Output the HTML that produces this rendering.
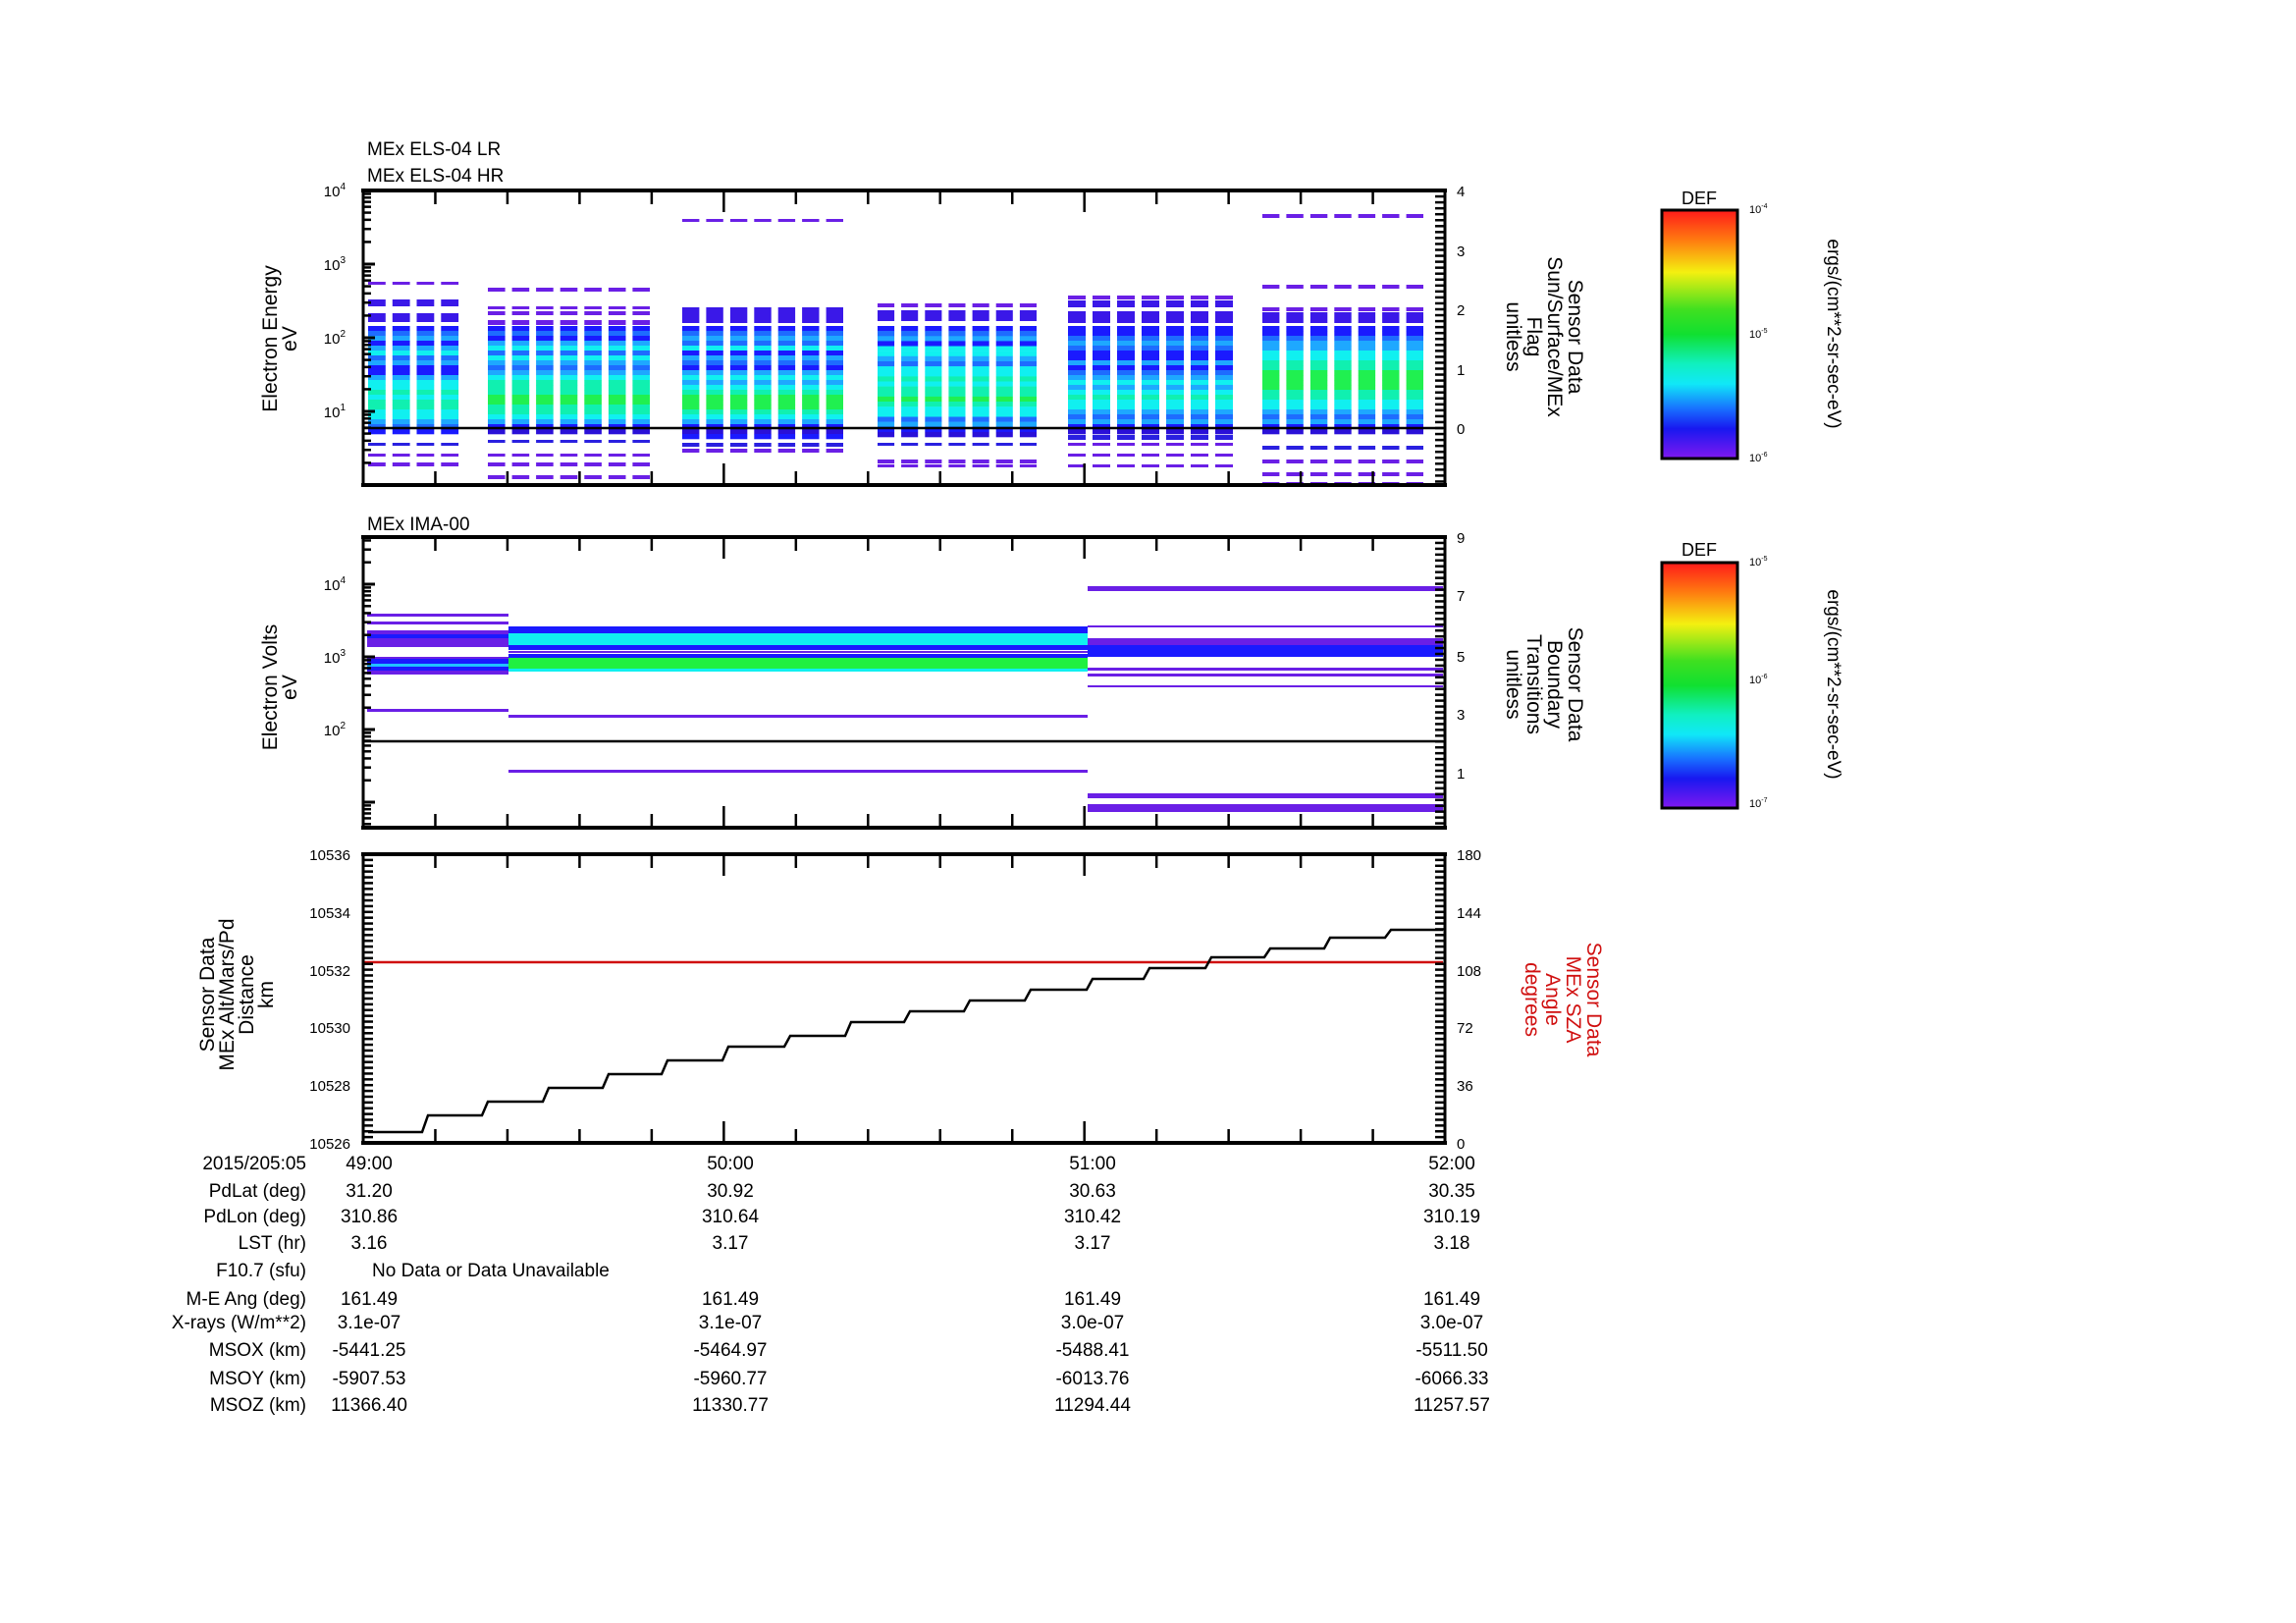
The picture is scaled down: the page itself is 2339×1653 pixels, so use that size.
<!DOCTYPE html>
<html><head><meta charset="utf-8"><style>
html,body{margin:0;padding:0;background:#fff;}
svg{display:block;font-family:"Liberation Sans",Arial,sans-serif;}
</style></head><body>
<svg id="s" width="2339" height="1653" viewBox="0 0 2339 1653" xmlns="http://www.w3.org/2000/svg">
<defs>
<linearGradient id="cb" x1="0" y1="0" x2="0" y2="1">
<stop offset="0" stop-color="#ff1a1a"/><stop offset="0.12" stop-color="#ff7a10"/><stop offset="0.25" stop-color="#f4f010"/><stop offset="0.4" stop-color="#40e020"/><stop offset="0.5" stop-color="#10e030"/><stop offset="0.62" stop-color="#10f0c0"/><stop offset="0.7" stop-color="#10e8f8"/><stop offset="0.8" stop-color="#1870ff"/><stop offset="0.88" stop-color="#1818f0"/><stop offset="1" stop-color="#8018f0"/>
</linearGradient>
</defs>
<g id="g"></g>
<g font-size="19" fill="#000">
<text x="374" y="158">MEx ELS-04 LR</text>
<text x="374" y="185">MEx ELS-04 HR</text>
<text x="374" y="540">MEx IMA-00</text>
</g>
<g font-size="15" text-anchor="end">
<text x="352" y="200">10<tspan font-size="10" dy="-7">4</tspan></text>
<text x="352" y="275">10<tspan font-size="10" dy="-7">3</tspan></text>
<text x="352" y="350">10<tspan font-size="10" dy="-7">2</tspan></text>
<text x="352" y="425">10<tspan font-size="10" dy="-7">1</tspan></text>
<text x="352" y="601">10<tspan font-size="10" dy="-7">4</tspan></text>
<text x="352" y="675">10<tspan font-size="10" dy="-7">3</tspan></text>
<text x="352" y="749">10<tspan font-size="10" dy="-7">2</tspan></text>
<text x="357" y="876">10536</text><text x="357" y="935">10534</text><text x="357" y="994">10532</text><text x="357" y="1052">10530</text><text x="357" y="1111">10528</text><text x="357" y="1170">10526</text>
</g>
<g font-size="15">
<text x="1484" y="200">4</text><text x="1484" y="261">3</text><text x="1484" y="321">2</text><text x="1484" y="382">1</text><text x="1484" y="442">0</text>
<text x="1484" y="553">9</text><text x="1484" y="612">7</text><text x="1484" y="674">5</text><text x="1484" y="733">3</text><text x="1484" y="793">1</text>
<text x="1484" y="876">180</text><text x="1484" y="935">144</text><text x="1484" y="994">108</text><text x="1484" y="1052">72</text><text x="1484" y="1111">36</text><text x="1484" y="1170">0</text>
</g>
<g font-size="21" text-anchor="middle">
<text transform="translate(282,345) rotate(-90)"><tspan x="0" y="0">Electron Energy</tspan><tspan x="0" y="20">eV</tspan></text>
<text transform="translate(282,700) rotate(-90)"><tspan x="0" y="0">Electron Volts</tspan><tspan x="0" y="20">eV</tspan></text>
<text transform="translate(218,1013) rotate(-90)"><tspan x="0" y="0">Sensor Data</tspan><tspan x="0" y="20">MEx Alt/Mars/Pd</tspan><tspan x="0" y="40">Distance</tspan><tspan x="0" y="60">km</tspan></text>
<text transform="translate(1598,343) rotate(90)"><tspan x="0" y="0">Sensor Data</tspan><tspan x="0" y="21">Sun/Surface/MEx</tspan><tspan x="0" y="42">Flag</tspan><tspan x="0" y="63">unitless</tspan></text>
<text transform="translate(1598,697) rotate(90)"><tspan x="0" y="0">Sensor Data</tspan><tspan x="0" y="21">Boundary</tspan><tspan x="0" y="42">Transitions</tspan><tspan x="0" y="63">unitless</tspan></text>
<text fill="#d01010" transform="translate(1617,1018) rotate(90)"><tspan x="0" y="0">Sensor Data</tspan><tspan x="0" y="21">MEx SZA</tspan><tspan x="0" y="42">Angle</tspan><tspan x="0" y="63">degrees</tspan></text>
</g>
<rect x="1693" y="214" width="77" height="253" fill="url(#cb)" stroke="#000" stroke-width="3"/>
<rect x="1693" y="573" width="77" height="250" fill="url(#cb)" stroke="#000" stroke-width="3"/>
<g font-size="18" text-anchor="middle"><text x="1731" y="208">DEF</text><text x="1731" y="566">DEF</text></g>
<g font-size="11">
<text x="1782" y="217">10<tspan font-size="7" dy="-5">-4</tspan></text>
<text x="1782" y="344">10<tspan font-size="7" dy="-5">-5</tspan></text>
<text x="1782" y="470">10<tspan font-size="7" dy="-5">-6</tspan></text>
<text x="1782" y="576">10<tspan font-size="7" dy="-5">-5</tspan></text>
<text x="1782" y="696">10<tspan font-size="7" dy="-5">-6</tspan></text>
<text x="1782" y="822">10<tspan font-size="7" dy="-5">-7</tspan></text>
</g>
<g font-size="19" text-anchor="middle">
<text transform="translate(1862,340) rotate(90)">ergs/(cm**2-sr-sec-eV)</text>
<text transform="translate(1862,697) rotate(90)">ergs/(cm**2-sr-sec-eV)</text>
</g>
<g font-size="19" text-anchor="end">
<text x="312" y="1191">2015/205:05</text><text x="312" y="1219">PdLat (deg)</text><text x="312" y="1245">PdLon (deg)</text><text x="312" y="1272">LST (hr)</text><text x="312" y="1300">F10.7 (sfu)</text><text x="312" y="1329">M-E Ang (deg)</text><text x="312" y="1353">X-rays (W/m**2)</text><text x="312" y="1381">MSOX (km)</text><text x="312" y="1410">MSOY (km)</text><text x="312" y="1437">MSOZ (km)</text>
</g>
<g font-size="19" text-anchor="middle">
<text x="376" y="1191">49:00</text><text x="744" y="1191">50:00</text><text x="1113" y="1191">51:00</text><text x="1479" y="1191">52:00</text>
<text x="376" y="1219">31.20</text><text x="744" y="1219">30.92</text><text x="1113" y="1219">30.63</text><text x="1479" y="1219">30.35</text>
<text x="376" y="1245">310.86</text><text x="744" y="1245">310.64</text><text x="1113" y="1245">310.42</text><text x="1479" y="1245">310.19</text>
<text x="376" y="1272">3.16</text><text x="744" y="1272">3.17</text><text x="1113" y="1272">3.17</text><text x="1479" y="1272">3.18</text>
<text x="376" y="1329">161.49</text><text x="744" y="1329">161.49</text><text x="1113" y="1329">161.49</text><text x="1479" y="1329">161.49</text>
<text x="376" y="1353">3.1e-07</text><text x="744" y="1353">3.1e-07</text><text x="1113" y="1353">3.0e-07</text><text x="1479" y="1353">3.0e-07</text>
<text x="376" y="1381">-5441.25</text><text x="744" y="1381">-5464.97</text><text x="1113" y="1381">-5488.41</text><text x="1479" y="1381">-5511.50</text>
<text x="376" y="1410">-5907.53</text><text x="744" y="1410">-5960.77</text><text x="1113" y="1410">-6013.76</text><text x="1479" y="1410">-6066.33</text>
<text x="376" y="1437">11366.40</text><text x="744" y="1437">11330.77</text><text x="1113" y="1437">11294.44</text><text x="1479" y="1437">11257.57</text>
</g>
<text x="379" y="1300" font-size="19">No Data or Data Unavailable</text>
</svg>
<script>
var g=document.getElementById('g'),h='';
function R(x,y,w,ht,c){h+='<rect x="'+x+'" y="'+y+'" width="'+w+'" height="'+ht+'" fill="'+c+'"/>';}
function L(x1,y1,x2,y2,w,c){h+='<line x1="'+x1+'" y1="'+y1+'" x2="'+x2+'" y2="'+y2+'" stroke="'+(c||'#000')+'" stroke-width="'+w+'"/>';}
var C={P:'#6a1fe6',B:'#1a1aff',D:'#2a10d8',b:'#1e6cff',s:'#1ea8ff',c:'#10f0f0',t:'#10f0b0',g:'#20f050'};
var blocks=[
[375,467,4,332,442,"BbsBscbsBBscctcttccsbB",[[287,3],[305,7],[319,9]],[[451,3],[462,3],[471,4]]],
[497,662,7,332,442,"BbBscbcsbsctttggttcsBD",[[293,4],[312,3],[317,4],[326,5]],[[448,3],[462,3],[471,4],[484,4]]],
[695,859,7,332,447,"BbsbcBsbBscsctgggtcsBDB",[[223,3],[313,16]],[[451,4],[457,4]]],
[894,1056,7,332,445,"BbsBccsbcctcttgtccbsBD",[[309,4],[316,11]],[[451,3],[468,4],[473,3]]],
[1088,1256,7,332,442,"BBbsbBBsBbscsctccsbsBD",[[301,4],[306,7],[317,12]],[[443,5],[451,3],[462,3],[473,3]]],
[1286,1450,7,332,442,"BBbssccttggggttccsbsBD",[[218,4],[290,4],[313,4],[318,11]],[[454,4],[468,4],[481,4],[491,2]]]];
blocks.forEach(function(b){var x0=b[0],x1=b[1],n=b[2],gap=7,w=(x1-x0+gap)/n-gap,st=b[5],bh=(b[4]-b[3])/st.length;
for(var i=0;i<n;i++){var x=x0+i*(w+gap);
for(var k=0;k<st.length;k++)R(x.toFixed(1),(b[3]+k*bh).toFixed(1),w.toFixed(1),(bh+0.3).toFixed(1),C[st[k]]);
b[6].forEach(function(d){R(x.toFixed(1),d[0],w.toFixed(1),d[1],d[1]>6?'#3a18e8':'#6a1fe6');});
b[7].forEach(function(d,j){R(x.toFixed(1),d[0],w.toFixed(1),d[1],j==0?'#2a20e0':'#6a1fe6');});}});
L(370,436,1470,436,2.5);
var P='#6a1fe6',B='#1a1aff';
R(374,625,144,3,P);R(374,633,144,3,P);R(374,642,144,17,P);R(374,646,144,4,B);R(374,669,144,18,P);R(374,671,144,12,B);R(374,676,144,3,'#20c0ff');R(374,722,144,3,P);
R(518,638,590,7,B);R(518,645,590,12,'#10f0f0');R(518,657,590,5,B);R(518,663,590,2,P);R(518,666,590,4,B);R(518,670,590,11,'#20f040');R(518,681,590,3,'#10f0f0');
R(518,728,590,3,P);R(518,784,590,3,P);
R(1108,597,362,5,P);R(1108,637,362,2,P);R(1108,650,362,19,P);R(1108,657,362,12,B);R(1108,680,362,3,P);R(1108,686,362,3,P);R(1108,698,362,2,P);R(1108,808,362,5,P);R(1108,819,362,8,P);
L(370,755,1470,755,2.5);
L(370,980,1470,980,2.5,'#d01010');
var st=[[375,1153],[436,1136],[497,1122],[559,1108],[620,1094],[680,1080],[742,1066],[805,1055],[867,1041],[927,1030],[988,1019],[1050,1008],[1113,997],[1171,986],[1234,975],[1294,966],[1355,955],[1417,947]];
var d='M'+st[0][0]+' '+st[0][1];
for(var i=1;i<st.length;i++){d+=' L'+(st[i][0]-6)+' '+st[i-1][1]+' L'+st[i][0]+' '+st[i][1];}
d+=' L1470 947';h+='<path d="'+d+'" fill="none" stroke="#000" stroke-width="2.5"/>';
function frame(t,b){L(368,t,1474,t,4);L(368,b,1474,b,4);L(370,t,370,b,3);L(1472,t,1472,b,3);
for(var i=0;i<=15;i++){var x=370+i*73.47,len=(i%5==0)?22:14;L(x,t,x,t+len,2.5);L(x,b,x,b-len,2.5);}}
frame(194,494);frame(547,843);frame(870,1164);
function logt(top,bot,dec,v0){for(var e=-1;e<6;e++)for(var k=1;k<10;k++){var y=top+(v0-(e+Math.log10(k)))*dec;if(y<top-1||y>bot+1)continue;var len=k==1?12:8;L(370,y,370+len,y,k==1?3:2.5);}}
logt(194,494,75,4);logt(547,843,74,4+48/74);
function lin(top,bot,step,side){for(var y=top;y<=bot+0.5;y+=step){if(side)L(1472,y,1472-10,y,2.5);else L(370,y,380,y,2.5);}}
lin(194,494,6.05,1);lin(547,843,5.95,1);lin(870,1164,5.88,1);lin(870,1164,5.88,0);
[[214,467],[573,823]].forEach(function(c){for(var e=0;e<2;e++)for(var k=1;k<10;k++){var y=c[1]-(e+Math.log10(k))*(c[1]-c[0])/2;L(1760,y,1770,y,2);}});
g.innerHTML=h;
</script>
</body></html>
